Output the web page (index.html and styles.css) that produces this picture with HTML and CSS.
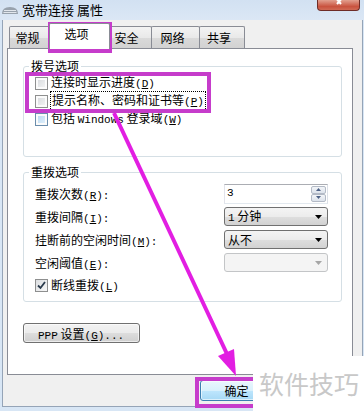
FILE: index.html
```html
<!DOCTYPE html>
<html lang="zh-CN">
<head>
    <meta charset="UTF-8">
    <meta name="viewport" content="width=device-width, initial-scale=1.0">
    <title>宽带连接 属性</title>
    <link rel="stylesheet" href="styles.css">
</head>
<body>
    <div class="window">
        <div class="titlebar">
            <svg class="app-icon" width="18" height="10" viewBox="0 0 18 10">
                <path d="M1 9 Q1 2 9 2 Q17 2 17 9 Z" fill="#98a2ad"/>
                <path d="M3 5.5h12M2.5 7.5h13" stroke="#e2e7ed" stroke-width="1"/>
            </svg>
            <span class="title">宽带连接 属性</span>
            <div class="close-btn">
                <svg width="12" height="6" viewBox="0 0 12 6">
                    <path d="M2 -3 L8 4 M10 -3 L4 4" stroke="#fff" stroke-width="2"/>
                </svg>
            </div>
        </div>

        <div class="client">
            <ul class="tabs">
                <li class="tab tab-general">常规</li>
                <li class="tab tab-options active">选项</li>
                <li class="tab tab-security">安全</li>
                <li class="tab tab-network">网络</li>
                <li class="tab tab-sharing">共享</li>
            </ul>

            <div class="panel">
                <fieldset class="group group-dial">
                    <legend>拨号选项</legend>
                    <div class="check"><span class="box"></span><span>连接时显示进度<span class="en">(<u>D</u>)</span></span></div>
                    <div class="check"><span class="box"></span><span class="focus">提示名称、密码和证书等<span class="en">(<u>P</u>)</span></span></div>
                    <div class="check"><span class="box box-hot"></span><span>包括 <span class="en">Windows</span> 登录域<span class="en">(<u>W</u>)</span></span></div>
                </fieldset>

                <fieldset class="group group-redial">
                    <legend>重拨选项</legend>
                    <div class="row">
                        <span>重拨次数<span class="en">(<u>R</u>):</span></span>
                        <div class="spin">
                            <span class="spin-value en">3</span>
                            <div class="spin-btns">
                                <span class="spin-btn"><svg width="5" height="3" viewBox="0 0 5 3"><path d="M0 3 L2.5 0 L5 3 Z" fill="#4d6185"/></svg></span>
                                <span class="spin-btn"><svg width="5" height="3" viewBox="0 0 5 3"><path d="M0 0 L2.5 3 L5 0 Z" fill="#4d6185"/></svg></span>
                            </div>
                        </div>
                    </div>
                    <div class="row">
                        <span>重拨间隔<span class="en">(<u>I</u>):</span></span>
                        <div class="select"><span><span class="en">1</span> 分钟</span><svg width="7" height="4" viewBox="0 0 7 4"><path d="M0 0 L7 0 L3.5 4 Z" fill="#000"/></svg></div>
                    </div>
                    <div class="row">
                        <span>挂断前的空闲时间<span class="en">(<u>M</u>):</span></span>
                        <div class="select"><span>从不</span><svg width="7" height="4" viewBox="0 0 7 4"><path d="M0 0 L7 0 L3.5 4 Z" fill="#000"/></svg></div>
                    </div>
                    <div class="row">
                        <span>空闲阈值<span class="en">(<u>E</u>):</span></span>
                        <div class="select select-disabled"><span></span><svg width="7" height="4" viewBox="0 0 7 4"><path d="M0 0 L7 0 L3.5 4 Z" fill="#a6a6a6"/></svg></div>
                    </div>
                    <div class="row">
                        <div class="check"><span class="box box-checked"><svg width="9" height="9" viewBox="0 0 9 9"><path d="M1 4.5 L3.5 7 L8 1" fill="none" stroke="#2a3a4c" stroke-width="1.8"/></svg></span><span>断线重拨<span class="en">(<u>L</u>)</span></span></div>
                    </div>
                </fieldset>

                <button type="button" class="btn btn-ppp"><span class="en">PPP</span> 设置<span class="en">(<u>G</u>)...</span></button>
            </div>

            <div class="footer">
                <button type="button" class="btn btn-ok">确定</button>
            </div>
        </div>

        <!-- annotations drawn over the dialog -->
        <div class="mark mark-tab"></div>
        <div class="mark mark-checks"></div>
        <div class="mark mark-ok"></div>
        <svg class="arrow" width="364" height="411" viewBox="0 0 364 411">
            <line x1="114" y1="113" x2="227" y2="354" stroke="#e21ee2" stroke-width="4"/>
            <polygon points="236,376 218,356 234,349" fill="#e21ee2"/>
        </svg>
        <div class="watermark">软件技巧</div>
    </div>
</body>
</html>
```

FILE: styles.css
```css
* {
    box-sizing: border-box;
}

body {
    margin: 0;
    font-family: "Noto Sans CJK SC", sans-serif;
    font-size: 12px;
    color: #000;
    background: #d8e6f5;
}

.en {
    font-family: "Liberation Mono", monospace;
    font-size: 11px;
}

.window {
    position: relative;
    width: 364px;
    height: 411px;
    overflow: hidden;
    background: #d8e6f5;
}

/* title bar */
.titlebar {
    height: 20px;
    display: flex;
    align-items: center;
    background: linear-gradient(#d2e1f2, #dbe7f5);
}

.app-icon {
    margin: 0 3px 0 1px;
}

.title {
    font-size: 13px;
    line-height: 16px;
}

.close-btn {
    align-self: flex-start;
    margin-left: auto;
    margin-right: 4px;
    width: 43px;
    height: 11px;
    border: 1px solid #6e2c27;
    border-top: none;
    border-radius: 0 0 4px 4px;
    background: linear-gradient(#e2a08f, #c9533f 65%, #d06a55);
    display: flex;
    justify-content: center;
}

/* client area */
.client {
    height: 387px;
    margin: 0 1px 0 2px;
    padding: 0 9px 0 4px;
    border: 1px solid #95a4b7;
    border-top: none;
    background: #f0f0f0;
}

.tabs {
    list-style: none;
    margin: 0;
    padding: 3px 0 0 2px;
    display: flex;
    align-items: flex-end;
}

.tab {
    height: 22px;
    padding: 3px 6px 0 0;
    line-height: 16px;
    text-align: center;
    border: 1px solid #898c95;
    border-bottom: none;
    border-radius: 2px 2px 0 0;
    background: linear-gradient(#f3f3f3, #e9e9e9 50%, #dadada 51%, #d2d2d2);
}

.tab + .tab {
    margin-left: -1px;
}

.tab-general { width: 43px; }
.tab-options { width: 57px; }
.tab-security { width: 45px; }
.tab-network { width: 49px; }
.tab-sharing { width: 46px; }

.tab.active {
    position: relative;
    z-index: 1;
    height: 26px;
    margin: 0 -2px -1px -3px;
    width: 61px;
    padding-top: 2px;
    background: #fff;
}

.tab.active + .tab {
    margin-left: -1px;
}

.panel {
    height: 327px;
    padding: 0 10px 0 15px;
    border: 1px solid #898c95;
    background: #fff;
}

/* group boxes */
.group {
    margin: 10px 0 0;
    border: 1px solid #d5dfe5;
    border-radius: 3px;
    min-width: 0;
}

.group legend {
    margin-left: -6px;
    padding: 0 2px;
    line-height: 14px;
}

.group-dial {
    padding: 1px 10px 28px 11px;
}

.group-redial {
    margin-top: 8px;
    padding: 3px 13px 4px 11px;
}

.check {
    height: 18px;
    display: flex;
    align-items: center;
    line-height: 15px;
}

.box {
    width: 13px;
    height: 13px;
    margin-right: 3px;
    border: 1px solid #8e8f8f;
    background: linear-gradient(135deg, #d4d7db, #f7f7f7);
    box-shadow: inset 0 0 0 2px #fbfbfb;
    display: flex;
    align-items: center;
    justify-content: center;
}

.box-hot {
    border-color: #6a8dac;
    background: linear-gradient(135deg, #b5d6f0, #e6f3fc);
}

.box-checked {
    background: linear-gradient(135deg, #dcdee1, #f7f7f7);
    box-shadow: none;
}

.focus {
    outline: 1px dotted #000;
    padding: 0 1px;
}

.row {
    height: 23px;
    display: flex;
    align-items: center;
    justify-content: space-between;
}

/* controls */
.spin {
    width: 104px;
    height: 20px;
    display: flex;
    border: 1px solid #abadb3;
    border-color: #abadb3 #dbdfe6 #e3e9ef #e2e3ea;
    background: #fff;
}

.spin-value {
    flex: 1;
    padding-left: 2px;
    line-height: 17px;
}

.spin-btns {
    width: 17px;
    padding: 1px;
    display: flex;
    flex-direction: column;
}

.spin-btn {
    flex: 1;
    display: flex;
    align-items: center;
    justify-content: center;
    border: 1px solid #b3bac6;
    border-radius: 2px;
    background: linear-gradient(#f3f5f8, #dde3ec);
}

.select {
    width: 104px;
    height: 19px;
    padding: 0 5px 0 3px;
    display: flex;
    align-items: center;
    justify-content: space-between;
    line-height: 15px;
    border: 1px solid #707070;
    border-radius: 3px;
    background: linear-gradient(#f4f4f4, #ececec 50%, #dedede 51%, #d2d2d2);
}

.select-disabled {
    border-color: #c3c5c7;
    background: #f4f4f4;
}

.btn {
    font-family: inherit;
    font-size: 12px;
    color: #000;
    width: 73px;
    height: 21px;
    padding: 0;
    border: 1px solid #707070;
    border-radius: 3px;
    background: linear-gradient(#f2f2f2, #ebebeb 50%, #dddddd 51%, #cfcfcf);
    box-shadow: inset 0 0 0 1px rgba(255, 255, 255, 0.6);
}

.btn-ppp {
    display: block;
    width: 117px;
    height: 20px;
    margin-top: 21px;
    padding-left: 14px;
    text-align: left;
}

.footer {
    display: flex;
    justify-content: flex-end;
    padding: 5px 80px 0 0;
}

.btn-ok {
    border-color: #3c7fb1;
    background: linear-gradient(#eaf6fd, #d9f0fc 50%, #bee6fd 51%, #a7d9f5);
}

/* annotations */
.mark {
    position: absolute;
    border: 4px solid #c63ccb;
}

.mark-tab {
    left: 48px;
    top: 22px;
    width: 64px;
    height: 31px;
}

.mark-checks {
    left: 25px;
    top: 72px;
    width: 186px;
    height: 41px;
}

.mark-ok {
    left: 195px;
    top: 377px;
    width: 70px;
    height: 31px;
}

.arrow {
    position: absolute;
    left: 0;
    top: 0;
    pointer-events: none;
}

.watermark {
    position: absolute;
    left: 253px;
    top: 356px;
    width: 111px;
    height: 55px;
    padding: 12px 0 0 6px;
    background: #fff;
    color: #c8c8c8;
    font-size: 25px;
    line-height: 30px;
}
```
